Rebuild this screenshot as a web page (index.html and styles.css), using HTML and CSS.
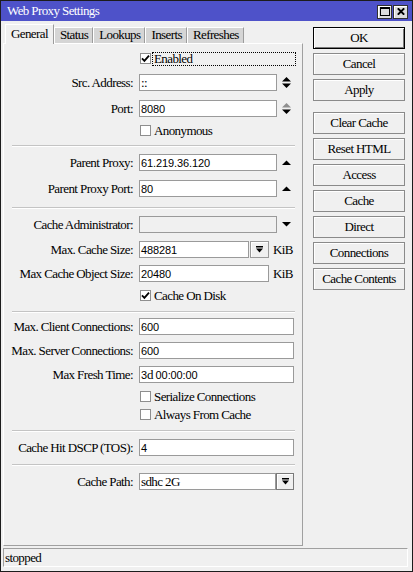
FILE: index.html
```html
<!DOCTYPE html>
<html>
<head>
<meta charset="utf-8">
<title>Web Proxy Settings</title>
<link rel="stylesheet" href="styles.css">
</head>
<body>
<div class="window">
  <div class="titlebar">
    <span class="title">Web Proxy Settings</span>
    <div class="tctl">
      <span class="tbtn"><svg width="10" height="9" viewBox="0 0 10 9"><rect x="0.5" y="0.5" width="9" height="8" fill="none" stroke="#000"/><rect x="0" y="0" width="10" height="2" fill="#000"/></svg></span>
      <span class="tbtn"><svg width="8" height="7" viewBox="0 0 8 7"><path d="M0.8 0.3 L7.2 6.7 M7.2 0.3 L0.8 6.7" stroke="#000" stroke-width="1.9"/></svg></span>
    </div>
  </div>
  <div class="main">
    <div class="left">
      <div class="tabs">
        <span class="tab active">General</span>
        <span class="tab">Status</span>
        <span class="tab">Lookups</span>
        <span class="tab">Inserts</span>
        <span class="tab">Refreshes</span>
      </div>
      <div class="panel">
        <div class="section s1">
          <div class="row cbrow">
            <span class="lbl"></span>
            <span class="cb"><svg width="9" height="9" viewBox="0 0 9 9"><path d="M1 4.3 L3.4 6.8 L8 1.6" fill="none" stroke="#000" stroke-width="1.8"/></svg></span>
            <span class="focus">Enabled</span>
          </div>
          <div class="row m9">
            <span class="lbl">Src. Address:</span>
            <span class="inp mid">::</span>
            <svg class="ico" width="9" height="11" viewBox="0 0 9 11"><path d="M0 4.5 L4.5 0 L9 4.5Z M0 6.5 L9 6.5 L4.5 11Z" fill="#000"/></svg>
          </div>
          <div class="row m9">
            <span class="lbl">Port:</span>
            <span class="inp mid"><span class="n">8080</span></span>
            <svg class="ico" width="9" height="11" viewBox="0 0 9 11"><path d="M0 4.5 L4.5 0 L9 4.5Z" fill="#8f8f8f"/><path d="M0 6.5 L9 6.5 L4.5 11Z" fill="#000"/></svg>
          </div>
          <div class="row cbrow">
            <span class="lbl"></span>
            <span class="cb"></span>
            <span class="cbtext">Anonymous</span>
          </div>
        </div>
        <div class="sep"></div>
        <div class="section s2">
          <div class="row">
            <span class="lbl">Parent Proxy:</span>
            <span class="inp mid"><span class="n">61.219.36.120</span></span>
            <svg class="ico" width="9" height="5" viewBox="0 0 9 5"><path d="M0 5 L4.5 0.5 L9 5Z" fill="#000"/></svg>
          </div>
          <div class="row m9">
            <span class="lbl">Parent Proxy Port:</span>
            <span class="inp mid"><span class="n">80</span></span>
            <svg class="ico" width="9" height="5" viewBox="0 0 9 5"><path d="M0 5 L4.5 0.5 L9 5Z" fill="#000"/></svg>
          </div>
        </div>
        <div class="sep"></div>
        <div class="section s3">
          <div class="row">
            <span class="lbl">Cache Administrator:</span>
            <span class="inp mid disabled"></span>
            <svg class="ico" width="9" height="5" viewBox="0 0 9 5"><path d="M0 0 L9 0 L4.5 4.5Z" fill="#000"/></svg>
          </div>
          <div class="row m8">
            <span class="lbl">Max. Cache Size:</span>
            <span class="inp short"><span class="n">488281</span></span>
            <span class="dd gap1"><svg width="7" height="7" viewBox="0 0 7 7"><path d="M0 0 H7 V1.5 H0Z M0 2.5 H7 L3.5 6.5Z" fill="#000"/></svg></span>
            <span class="unit">KiB</span>
          </div>
          <div class="row">
            <span class="lbl">Max Cache Object Size:</span>
            <span class="inp obj"><span class="n">20480</span></span>
            <span class="unit">KiB</span>
          </div>
          <div class="row cbrow">
            <span class="lbl"></span>
            <span class="cb"><svg width="9" height="9" viewBox="0 0 9 9"><path d="M1 4.3 L3.4 6.8 L8 1.6" fill="none" stroke="#000" stroke-width="1.8"/></svg></span>
            <span class="cbtext">Cache On Disk</span>
          </div>
        </div>
        <div class="sep"></div>
        <div class="section s4">
          <div class="row">
            <span class="lbl">Max. Client Connections:</span>
            <span class="inp wide"><span class="n">600</span></span>
          </div>
          <div class="row">
            <span class="lbl">Max. Server Connections:</span>
            <span class="inp wide"><span class="n">600</span></span>
          </div>
          <div class="row">
            <span class="lbl">Max Fresh Time:</span>
            <span class="inp wide"><span class="n">3</span>d <span class="n">00:00:00</span></span>
          </div>
          <div class="row cbrow">
            <span class="lbl"></span>
            <span class="cb"></span>
            <span class="cbtext">Serialize Connections</span>
          </div>
          <div class="row cbrow m5">
            <span class="lbl"></span>
            <span class="cb"></span>
            <span class="cbtext">Always From Cache</span>
          </div>
        </div>
        <div class="sep"></div>
        <div class="section s5">
          <div class="row">
            <span class="lbl">Cache Hit DSCP (TOS):</span>
            <span class="inp wide"><span class="n">4</span></span>
          </div>
        </div>
        <div class="sep"></div>
        <div class="section s6">
          <div class="row">
            <span class="lbl">Cache Path:</span>
            <span class="inp path">sdhc 2G</span>
            <span class="dd dark"><svg width="7" height="7" viewBox="0 0 7 7"><path d="M0 0 H7 V1.5 H0Z M0 2.5 H7 L3.5 6.5Z" fill="#000"/></svg></span>
          </div>
        </div>
      </div>
    </div>
    <div class="btns">
      <span class="btn ok">OK</span>
      <span class="btn">Cancel</span>
      <span class="btn">Apply</span>
      <span class="btn grp">Clear Cache</span>
      <span class="btn">Reset HTML</span>
      <span class="btn">Access</span>
      <span class="btn">Cache</span>
      <span class="btn">Direct</span>
      <span class="btn">Connections</span>
      <span class="btn">Cache Contents</span>
    </div>
  </div>
  <div class="status">stopped</div>
</div>
</body>
</html>
```

FILE: styles.css
```css
* { box-sizing: border-box; }
html, body { margin: 0; padding: 0; }
body {
  width: 413px;
  height: 572px;
  overflow: hidden;
  background: #f0f0f0;
  font-family: "Liberation Serif", "Times New Roman", serif;
  font-size: 13px;
  letter-spacing: -0.6px;
  color: #000;
}
.window {
  width: 413px;
  height: 572px;
  border: 1px solid #1c1c1c;
  display: flex;
  flex-direction: column;
  background: #f0f0f0;
}
.titlebar {
  height: 20px;
  flex: none;
  background: #4e52c9;
  color: #fff;
  display: flex;
  align-items: center;
  justify-content: space-between;
  padding: 0 4px 0 6px;
}
.title { line-height: 20px; }
.tctl { display: flex; gap: 1px; margin-top: 1px; }
.tbtn {
  width: 15px;
  height: 14px;
  background: #dcdcdc;
  border: 1px solid #303030;
  box-shadow: inset 1px 1px #fff;
  display: flex;
  align-items: center;
  justify-content: center;
}
.main { flex: 1; display: flex; min-height: 0; }
.left {
  width: 302px;
  flex: none;
  display: flex;
  flex-direction: column;
  padding: 3px 0 2px 2px;
}
.tabs {
  height: 19px;
  flex: none;
  display: flex;
  align-items: flex-end;
  padding-left: 2px;
  position: relative;
  z-index: 1;
}
.tab {
  height: 16px;
  line-height: 14px;
  padding: 0 4px 0 5px;
  background: #d5d5d5;
  border: 1px solid;
  border-color: #fff #9c9c9c transparent #fff;
  border-bottom: none;
  white-space: nowrap;
}
.tab.active {
  height: 20px;
  line-height: 17px;
  margin-bottom: -1px;
  background: #f0f0f0;
  padding: 0 5px;
}
.panel {
  flex: 1;
  border: 1px solid;
  border-color: #fff #a0a0a0 #a0a0a0 #fff;
  display: flex;
  flex-direction: column;
}
.section { display: flex; flex-direction: column; }
.section > .row + .row { margin-top: 7px; }
.section > .row.m9 { margin-top: 9px; }
.section > .row.m8 { margin-top: 8px; }
.section > .row.m5 { margin-top: 5px; }
.s1 { padding: 8px 0 8px; }
.s2 { padding: 7px 0 10px; }
.s3 { padding: 7px 0 9px; }
.s4 { padding: 5px 0 9px; }
.s5 { padding: 7px 0 8px; }
.s6 { padding: 7px 0 0; }
.sep {
  height: 2px;
  flex: none;
  border-top: 1px solid #c4c4c4;
  border-bottom: 1px solid #fff;
  margin: 0 7px 0 8px;
}
.row {
  display: flex;
  align-items: center;
  height: 17px;
  flex: none;
  white-space: nowrap;
}
.row.cbrow { height: 13px; }
.lbl {
  width: 135px;
  flex: none;
  text-align: right;
  padding-right: 6px;
}
.inp {
  display: block;
  height: 17px;
  line-height: 15px;
  flex: none;
  border: 1px solid #9a9a9a;
  background: #fff;
  padding-left: 1px;
  overflow: hidden;
  white-space: pre;
}
.inp.mid { width: 138px; }
.inp.wide { width: 155px; }
.inp.short { width: 110px; }
.inp.obj { width: 130px; }
.inp.path { width: 137px; }
.inp.disabled { background: #f0f0f0; }
.n {
  font-family: "Liberation Sans", Arial, sans-serif;
  font-size: 11px;
  letter-spacing: -0.1px;
}
.ico { margin-left: 5px; flex: none; }
.dd {
  width: 18px;
  height: 17px;
  flex: none;
  border: 1px solid #9a9a9a;
  background: #f0f0f0;
  box-shadow: inset 1px 1px #fff;
  display: flex;
  align-items: center;
  justify-content: center;
}
.dd.gap1 { width: 19px; margin-left: 1px; }
.dd.dark { border-color: #7a7a7a; }
.unit { margin-left: 4px; }
.cb {
  width: 11px;
  height: 11px;
  flex: none;
  margin-left: 1px;
  border: 1px solid #8e8e8e;
  background: #fff;
  display: flex;
  align-items: center;
  justify-content: center;
}
.cbtext { margin-left: 3px; }
.focus {
  margin-left: 1px;
  width: 144px;
  height: 14px;
  border: 1px dotted #000;
  padding-left: 1px;
  line-height: 12px;
}
.btns {
  width: 92px;
  flex: none;
  margin-left: 10px;
  padding-top: 6px;
  display: flex;
  flex-direction: column;
  gap: 4px;
}
.btn {
  height: 22px;
  flex: none;
  border: 1px solid #8a8a8a;
  background: #f0f0f0;
  box-shadow: inset 1px 1px #fff;
  display: flex;
  align-items: center;
  justify-content: center;
  white-space: nowrap;
}
.btn.ok {
  border-color: #000;
  box-shadow: inset 1px 1px #fff, inset -1px -1px #7a7a7a;
}
.btn.grp { margin-top: 7px; }
.status {
  height: 19px;
  flex: none;
  margin: 0 4px 4px 2px;
  border: 1px solid;
  border-color: #a0a0a0 #fff #fff #a0a0a0;
  padding-left: 1px;
  line-height: 17px;
}
```
